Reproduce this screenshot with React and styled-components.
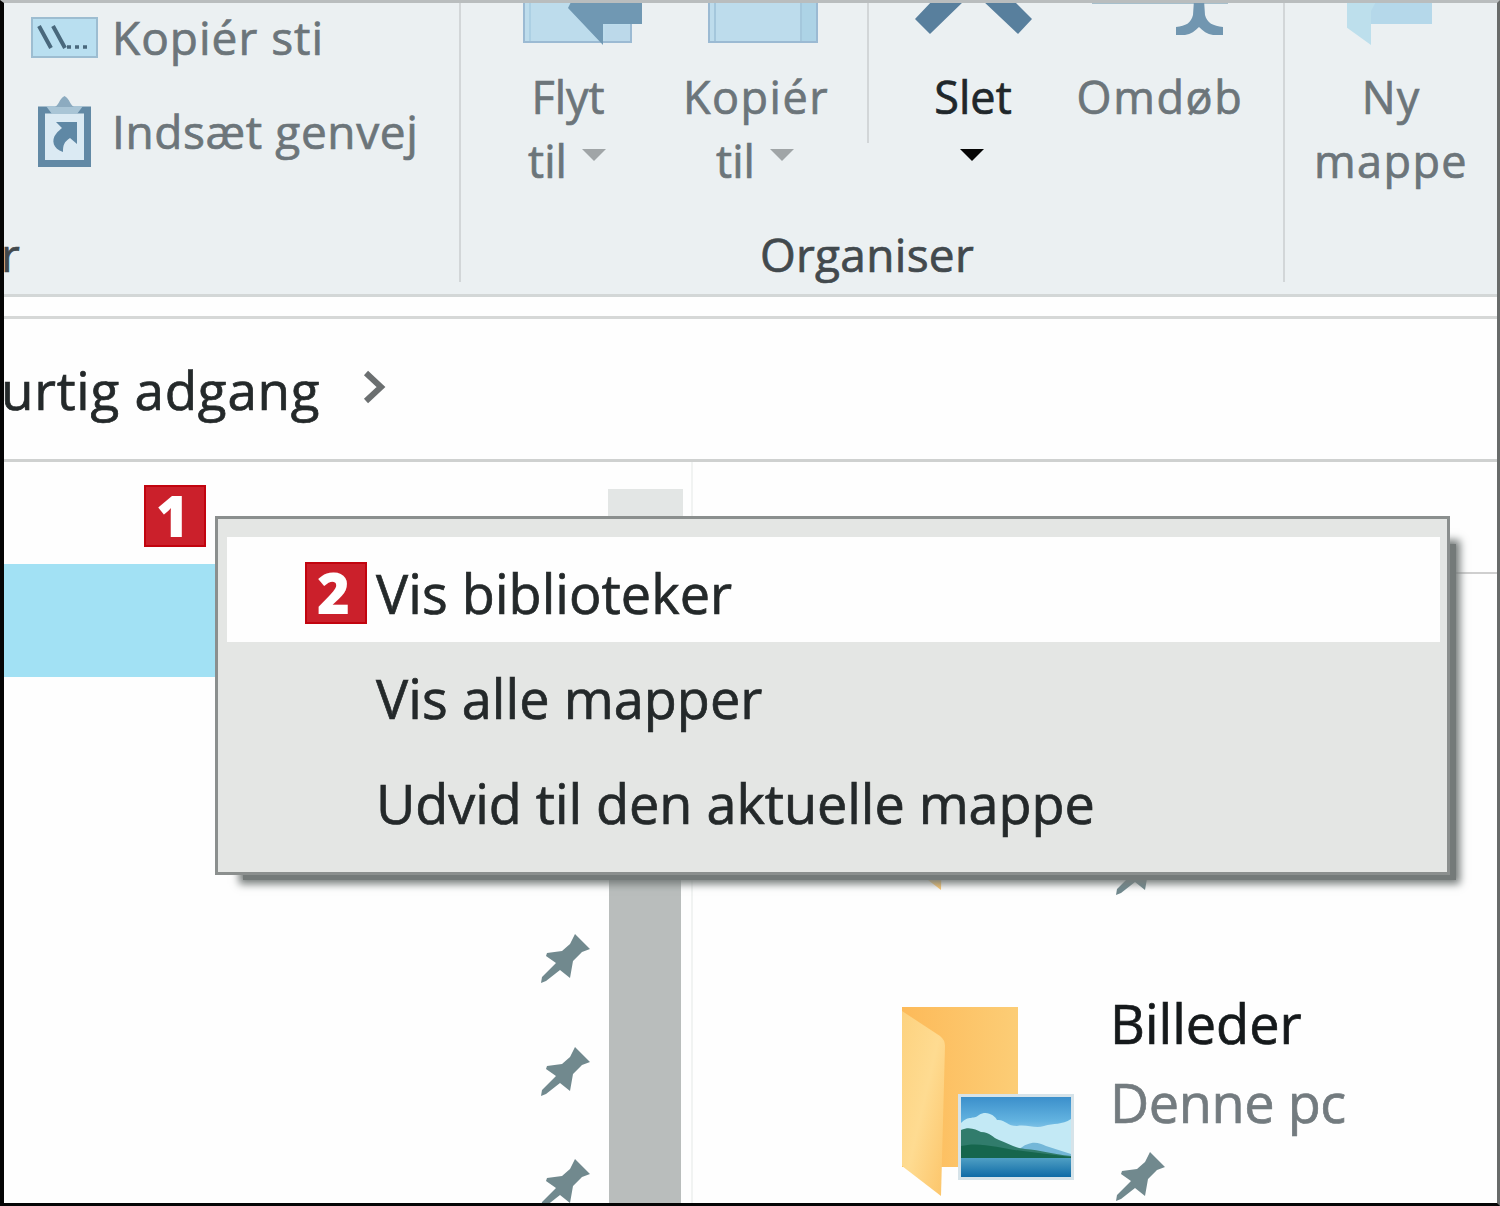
import React from 'react';
import styled, { createGlobalStyle } from 'styled-components';

const GlobalStyle = createGlobalStyle`
  body {
    margin: 0;
    font-family: 'Open Sans', 'Noto Sans', sans-serif;
    background: #fff;
    -webkit-text-stroke: 0.7px currentColor;
  }
  *, *::before, *::after {
    box-sizing: border-box;
  }
`;

const Window = styled.div`
  position: relative;
  display: flex;
  flex-direction: column;
  width: 1500px;
  height: 1206px;
  overflow: hidden;
  background: #fefefe;
  border-top: 3px solid #b9bdbe;
  border-right: 3px solid #686b6a;
  border-bottom: 3px solid #050505;
  border-left: 4px solid #050505;
  white-space: nowrap;
`;

const Ribbon = styled.div`
  display: flex;
  flex: none;
  height: 294px;
  background: #ebf0f2;
  border-bottom: 3px solid #d3d7d7;
`;

const Group = styled.section`
  display: flex;
  flex-direction: column;
  flex: none;
  width: ${props => props.$width}px;
  padding-bottom: 12px;
`;

const GroupBody = styled.div`
  flex: 1;
`;

const GroupCaption = styled.div`
  height: 56px;
  padding-right: 10px;
  line-height: 56px;
  font-size: 46px;
  letter-spacing: 0.3px;
  text-align: center;
  color: #42494d;
`;

const CutCaption = styled(GroupCaption)`
  text-align: left;
  text-indent: -3px;
`;

const Separator = styled.div`
  flex: none;
  width: 2px;
  height: ${props => props.$height}px;
  background: #d2d6d8;
  justify-self: end;
`;

const SmallCommand = styled.div`
  display: grid;
  grid-template-columns: 67px 1fr;
  column-gap: 14px;
  align-items: center;
  justify-items: start;
  height: ${props => props.$height}px;
  margin-top: ${props => props.$gap || 0}px;
  padding-left: 27px;
  font-size: 46px;
  line-height: 60px;
  letter-spacing: ${props => props.$spacing || 0}px;
  color: #6c757a;

  svg {
    justify-self: center;
  }
`;

const OrganizeGrid = styled.div`
  display: grid;
  grid-template-columns: 214px 162px 32px 208px 166px;
  align-items: start;
`;

const Command = styled.div`
  display: flex;
  flex-direction: column;
  align-items: center;
  font-size: 45px;
  line-height: 64px;
  color: ${props => (props.$active ? '#20272b' : '#6c757a')};
`;

const IconSlot = styled.div`
  height: 62px;
  padding-left: ${props => props.$shift || 0}px;
  line-height: 0;
`;

const CommandLine = styled.div`
  display: flex;
  height: 64px;
  gap: 15px;
  letter-spacing: ${props => props.$spacing || 0}px;
`;

const Caret = styled.span`
  width: 0;
  height: 0;
  margin-top: 20px;
  margin-right: 2px;
  border: 12px solid transparent;
  border-bottom: 0;
  border-top-color: ${props => (props.$active ? '#050505' : '#a0a5a7')};
`;

const AddressBar = styled.div`
  display: flex;
  align-items: center;
  flex: none;
  gap: 43px;
  height: 146px;
  margin-top: 19px;
  padding-bottom: 5px;
  border-top: 3px solid #d6d8d7;
  border-bottom: 3px solid #cfd1d0;
  font-size: 53px;
  color: #24292a;
`;

const Crumb = styled.span`
  margin-left: -3px;
  padding-top: 5px;
  letter-spacing: 0.75px;
`;

const Body = styled.div`
  display: flex;
  flex: 1;
  min-height: 0;
`;

const NavPane = styled.div`
  width: 604px;
  padding-top: 102px;
`;

const NavRow = styled.div`
  display: flex;
  align-items: center;
  justify-content: flex-end;
  height: 112.7px;
  padding-right: 18px;
  background: ${props => (props.$selected ? '#a2e1f4' : 'transparent')};
`;

const ScrollTrack = styled.div`
  display: flex;
  flex-direction: column;
  width: 75px;
  padding: 27px 2px 0 0;
`;

const ScrollButton = styled.div`
  height: 75px;
  background: #e3e6e5;
  margin-right: -2px;
`;

const ScrollThumb = styled.div`
  flex: 1;
  margin-left: 1px;
  background: #b9bdbc;
`;

const Content = styled.div`
  flex: 1;
  margin-left: 8px;
  border-left: 2px solid #f1f3f2;
`;

const ContentHeader = styled.div`
  height: 112px;
  margin-bottom: 10px;
  border-bottom: 2px solid #cfcfcf;
`;

const FolderItem = styled.div`
  display: grid;
  grid-template-columns: 180px 1fr;
  column-gap: 33px;
  height: 306px;
  padding-left: 207px;
`;

const FolderArt = styled.div`
  padding-top: 116px;
  line-height: 0;
`;

const FolderText = styled.div`
  display: flex;
  flex-direction: column;
  padding-top: 94px;
`;

const FolderLine = styled.div`
  height: 79px;
  margin-left: -3px;
  line-height: 79px;
  font-size: 54px;
  letter-spacing: ${props => props.$spacing}px;
  color: ${props => (props.$muted ? '#737b7f' : '#15191b')};
`;

const PinSlot = styled.div`
  padding: 10px 0 0 3px;
  line-height: 0;
`;

const MenuLayer = styled.div`
  position: absolute;
  left: 211px;
  top: 513px;
  width: 1235px;
  height: 359px;

  &::before {
    content: '';
    position: absolute;
    inset: 28px -6px -5px 28px;
    background: #747a79;
    box-shadow: 0 0 8px 4px #747a79;
  }
`;

const Menu = styled.div`
  position: relative;
  height: 100%;
  padding: 18px 7px 0 9px;
  background: #e4e6e4;
  border: 3px solid #8b8f8e;
`;

const MenuItem = styled.div`
  height: 105px;
  padding-left: 149px;
  line-height: 112px;
  font-size: 54px;
  letter-spacing: ${props => props.$spacing}px;
  color: #24292a;
  background: ${props => (props.$hover ? '#fefefe' : 'transparent')};
`;

const StepBadge = styled.div`
  position: absolute;
  left: ${props => props.$x}px;
  top: ${props => props.$y}px;
  width: 62px;
  height: 62px;
  padding-right: 5px;
  border: 2px solid #c2040f;
  background: #cb202b;
  color: #fff;
  font-size: 56px;
  font-weight: 800;
  line-height: 57px;
  text-align: center;
  -webkit-text-stroke: 0;
`;

const PathIcon = () => (
  <svg width="67" height="41" viewBox="0 0 67 41">
    <rect x="1" y="1" width="65" height="39" fill="#b9dff0" stroke="#9dbdd1" strokeWidth="2" />
    <path d="M8 9l12 22M22 9l12 22" stroke="#49687c" strokeWidth="4" fill="none" />
    <path d="M36 30h4M44 30h4M52 30h4" stroke="#49687c" strokeWidth="3.5" />
  </svg>
);

const ShortcutIcon = () => (
  <svg width="53" height="72" viewBox="0 0 53 72">
    <rect x="3.5" y="15" width="46" height="53.5" fill="#dbeaf3" stroke="#6289a5" strokeWidth="7" />
    <path d="M8 11h37l-6 8H14z" fill="#a9c5d6" />
    <path d="M17 12c4-2 4-8 9.500-11 5.500 3 5.500 9 9.500 11z" fill="#8cabc0" />
    <path d="M18 27h21v22l-7-6c-6 4-7 7-7 14-10-3-12-12-7-18 2-3 4-4 6-6z" fill="#5f88a5" />
  </svg>
);

const MoveIcon = () => (
  <svg width="120" height="46" viewBox="521 3 120 46">
    <rect x="523" y="0" width="107" height="42" fill="#bddcec" stroke="#9bbad3" strokeWidth="2" />
    <path d="M529 3v38" stroke="#acd0e4" strokeWidth="2" />
    <rect x="604" y="25" width="26" height="16" fill="#bcd9ea" />
    <path d="M604 42h26V25" stroke="#9bbad3" strokeWidth="2" fill="none" />
    <path d="M571 0l-4 8 35 37V24h39V0z" fill="#7098b3" />
  </svg>
);

const CopyIcon = () => (
  <svg width="110" height="46" viewBox="708 3 110 46">
    <rect x="709" y="0" width="108" height="42" fill="#bddcec" stroke="#9bbad3" strokeWidth="2" />
    <path d="M801 3h15v38h-15z" fill="#add3e6" />
    <path d="M801 3v38M715 3v38" stroke="#a4c7dc" strokeWidth="2" />
  </svg>
);

const DeleteIcon = () => (
  <svg width="118" height="46" viewBox="915 3 118 46">
    <path d="M934 0l-18 19 15 15 35-34zM983 0l36 34 14-15-19-19z" fill="#587f9d" />
  </svg>
);

const RenameIcon = () => (
  <svg width="136" height="46" viewBox="1092 3 136 46">
    <path d="M1092 0h136v4h-136z" fill="#a6bfcc" />
    <path d="M1194 0h10l1 15c2 8 8 11 18 12v8h-10c-6-1-10-4-14-8-4 4-8 7-14 8h-9v-8c10-1 15-4 17-12z" fill="#7196b0" />
  </svg>
);

const NewFolderIcon = () => (
  <svg width="88" height="46" viewBox="1347 3 88 46">
    <path d="M1371 0h61v24h-61z" fill="#b5d8ea" />
    <path d="M1346 0h31l-6 11v34l-25-18z" fill="#bddfec" />
  </svg>
);

const PinIcon = () => (
  <svg width="49" height="49" viewBox="0 0 49 49">
    <path d="M34 0l15 15-8 3-9 9-3 17-10-8L5 47l-5 2 1-6 14-14L5 22l1-3 15-2 8-7z" fill="#71898e" />
  </svg>
);

const ChevronIcon = () => (
  <svg width="24" height="34" viewBox="0 0 24 34">
    <path d="M3 3l15 14L3 31" fill="none" stroke="#6b6f70" strokeWidth="6" />
  </svg>
);

// Open folder with a landscape thumbnail in its lower right corner
const PictureFolderIcon = () => (
  <svg width="176" height="192" viewBox="900 1006 176 192">
    <defs>
      <linearGradient id="back" x1="0" x2="1">
        <stop offset="0" stopColor="#fdba59" />
        <stop offset="1" stopColor="#fccd76" />
      </linearGradient>
      <linearGradient id="flap" x1="0" x2="1" y2="1">
        <stop offset="0" stopColor="#fdd27f" />
        <stop offset=".5" stopColor="#fedb91" />
        <stop offset="1" stopColor="#fcc468" />
      </linearGradient>
      <linearGradient id="sky" x2="0" y2="1">
        <stop offset="0" stopColor="#3b8fcb" />
        <stop offset=".3" stopColor="#63b3e0" />
        <stop offset=".65" stopColor="#d5f0f8" />
      </linearGradient>
      <linearGradient id="sea" x2="0" y2="1">
        <stop offset="0" stopColor="#4f9fc4" />
        <stop offset="1" stopColor="#0f6ba6" />
      </linearGradient>
    </defs>
    <path d="M902 1007h116v160h-116z" fill="url(#back)" />
    <path d="M902 1011l38 25q5 4 5 10l-4 150-39-30z" fill="url(#flap)" />
    <path d="M958 1094h116v86H958z" fill="#d6e3e9" />
    <path d="M961 1097h110v80H961z" fill="url(#sky)" />
    <path d="M961 1123c8-8 12-3 18-8 8-5 16 1 18 5 8-1 10 6 20 6 10-2 18 3 27 0 10-3 18-1 27-7v38H961z" fill="#c3e9f5" />
    <path d="M1018 1150c12-10 20-8 28-4l25 8v6h-60z" fill="#74b7d8" />
    <path d="M961 1130c9-4 15 0 20 2 9 0 12 6 18 8 9 3 15 8 26 9 16 1 27 5 46 7v3H961z" fill="#317c6c" />
    <path d="M961 1146c19-5 42 3 62 5l48 6v3H961z" fill="#16664d" />
    <path d="M961 1158h110v19H961z" fill="url(#sea)" />
  </svg>
);

const menuItems = [
  { label: 'Vis biblioteker', spacing: 0.05, hover: true },
  { label: 'Vis alle mapper', spacing: 0.05 },
  { label: 'Udvid til den aktuelle mappe', spacing: -0.05 },
];

const navRows = ['selected', '', '', 'pinned', 'pinned', 'pinned'];

const App = () => (
  <>
    <GlobalStyle />
    <Window>
      <Ribbon>
        <Group $width={455}>
          <GroupBody>
            <SmallCommand $height={68} $spacing={1}>
              <PathIcon />
              <span>Kopiér sti</span>
            </SmallCommand>
            <SmallCommand $height={97} $gap={11} $spacing={0.6}>
              <ShortcutIcon />
              <span>Indsæt genvej</span>
            </SmallCommand>
          </GroupBody>
          <CutCaption>r</CutCaption>
        </Group>
        <Separator $height={279} />
        <Group $width={822}>
          <GroupBody>
            <OrganizeGrid>
              <Command>
                <IconSlot $shift={27}><MoveIcon /></IconSlot>
                <CommandLine>Flyt</CommandLine>
                <CommandLine>til<Caret /></CommandLine>
              </Command>
              <Command>
                <IconSlot $shift={14}><CopyIcon /></IconSlot>
                <CommandLine $spacing={1.5}>Kopiér</CommandLine>
                <CommandLine>til<Caret /></CommandLine>
              </Command>
              <Separator $height={140} />
              <Command $active>
                <IconSlot><DeleteIcon /></IconSlot>
                <CommandLine>Slet</CommandLine>
                <CommandLine><Caret $active /></CommandLine>
              </Command>
              <Command>
                <IconSlot><RenameIcon /></IconSlot>
                <CommandLine $spacing={1.6}>Omdøb</CommandLine>
              </Command>
            </OrganizeGrid>
          </GroupBody>
          <GroupCaption>Organiser</GroupCaption>
        </Group>
        <Separator $height={279} />
        <Group $width={212}>
          <Command>
            <IconSlot><NewFolderIcon /></IconSlot>
            <CommandLine $spacing={1}>Ny</CommandLine>
            <CommandLine $spacing={1.4}>mappe</CommandLine>
          </Command>
        </Group>
      </Ribbon>

      <AddressBar>
        <Crumb>urtig adgang</Crumb>
        <ChevronIcon />
      </AddressBar>

      <Body>
        <NavPane>
          {navRows.map((state, i) => (
            <NavRow key={i} $selected={state === 'selected'}>
              {state === 'pinned' && <PinIcon />}
            </NavRow>
          ))}
        </NavPane>
        <ScrollTrack>
          <ScrollButton />
          <ScrollThumb />
        </ScrollTrack>
        <Content>
          <ContentHeader />
          <FolderItem>
            <FolderArt><PictureFolderIcon /></FolderArt>
            <FolderText>
              <FolderLine />
              <FolderLine />
              <PinSlot><PinIcon /></PinSlot>
            </FolderText>
          </FolderItem>
          <FolderItem>
            <FolderArt><PictureFolderIcon /></FolderArt>
            <FolderText>
              <FolderLine $spacing={0}>Billeder</FolderLine>
              <FolderLine $spacing={-0.4} $muted>Denne pc</FolderLine>
              <PinSlot><PinIcon /></PinSlot>
            </FolderText>
          </FolderItem>
        </Content>
      </Body>

      <MenuLayer>
        <Menu>
          {menuItems.map(item => (
            <MenuItem key={item.label} $hover={item.hover} $spacing={item.spacing}>
              {item.label}
            </MenuItem>
          ))}
        </Menu>
      </MenuLayer>
      <StepBadge $x={140} $y={482}>1</StepBadge>
      <StepBadge $x={301} $y={559}>2</StepBadge>
    </Window>
  </>
);

export default App;
